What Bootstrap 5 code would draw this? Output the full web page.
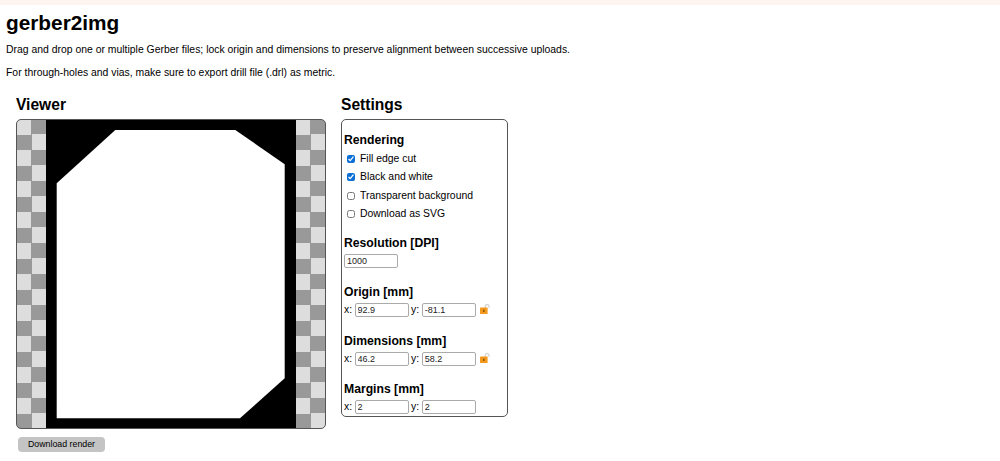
<!DOCTYPE html>
<html lang="en">
<head>
    <meta charset="UTF-8">
    <meta name="viewport" content="width=device-width, initial-scale=1.0">
    <title>gerber2img</title>
    <link href="https://cdn.jsdelivr.net/npm/bootstrap@5.3.0/dist/css/bootstrap.min.css" rel="stylesheet">
    <style>
        html, body { height: 461px; overflow: hidden; }
        body { font-family: "Liberation Sans", Arial, sans-serif; font-size: 10.42px; line-height: 12px; color: #000; }
        .top-strip { height: 5px; background: #fff5f0; }
        .page-title { font-size: 20.8px; line-height: 24px; font-weight: 700; margin: 6px 0 0 6px; }
        .intro { margin: 9px 0 0 6px; }
        .intro + .intro { margin-top: 11px; }
        .panels { margin: 17px 0 0 16px; gap: 15px; }
        .panel-title { font-size: 15.6px; line-height: 18px; font-weight: 700; margin: 0 0 5px; }
        .viewer-box {
            width: 310px; height: 310px; border: 1px solid #555; border-radius: 5px;
            background-color: #ddd;
            background-image: conic-gradient(#999 25%, #ddd 0 50%, #999 0 75%, #ddd 0);
            background-size: 31px 31px;
            background-origin: border-box;
            overflow: hidden;
        }
        .viewer-box svg { display: block; }
        .render-btn {
            width: 87px; height: 15px; margin: 8px 0 0 2px; padding: 0; border: 0; border-radius: 4px;
            background: #c4c4c4; color: #000; font-size: 8.8px; line-height: 15px;
        }
        .settings-box { width: 167px; height: 298px; border: 1px solid #555; border-radius: 5px; padding: 12.5px 2px 0 2px; }
        .group-title { font-size: 12.2px; line-height: 14px; font-weight: 700; margin: 0; }
        .check-list { margin-top: 3.5px; }
        .check-row { height: 18.3px; padding-left: 3px; gap: 5px; margin: 0; }
        .check-row input { width: 8px; height: 8px; margin: 0; accent-color: #0b6fd6; }
        .first-gap { margin-top: 13px; }
        .group-gap { margin-top: 16.7px; }
        .num-field { border: 1px solid #aaa; border-radius: 2px; height: 14px; padding: 0 2px; font-size: 9px; line-height: 12px; width: 54px; font-family: inherit; color: #222; background: #fff; }
        .field-row { gap: 2.5px; margin-top: 4px; height: 14px; }
        .lock-icon { margin-left: 1.3px; }
    </style>
</head>
<body>
    <div class="top-strip"></div>
    <h1 class="page-title">gerber2img</h1>
    <p class="intro">Drag and drop one or multiple Gerber files; lock origin and dimensions to preserve alignment between successive uploads.</p>
    <p class="intro">For through-holes and vias, make sure to export drill file (.drl) as metric.</p>

    <div class="panels d-flex align-items-start">
        <!-- Viewer -->
        <div>
            <h2 class="panel-title">Viewer</h2>
            <div class="viewer-box d-flex justify-content-center">
                <svg width="250" height="308" viewBox="0 0 250 308">
                    <rect width="250" height="308" fill="#000"/>
                    <polygon points="10.7,63.3 69.3,10 189.3,10 238.7,44.3 238.7,258.3 194,298.3 10.7,298.3" fill="#fff"/>
                </svg>
            </div>
            <button type="button" class="render-btn d-block">Download render</button>
        </div>

        <!-- Settings -->
        <div>
            <h2 class="panel-title">Settings</h2>
            <div class="settings-box">
                <h3 class="group-title">Rendering</h3>
                <div class="check-list">
                    <label class="check-row d-flex align-items-center"><input type="checkbox" checked>Fill edge cut</label>
                    <label class="check-row d-flex align-items-center"><input type="checkbox" checked>Black and white</label>
                    <label class="check-row d-flex align-items-center"><input type="checkbox">Transparent background</label>
                    <label class="check-row d-flex align-items-center"><input type="checkbox">Download as SVG</label>
                </div>

                <h3 class="group-title first-gap">Resolution [DPI]</h3>
                <div class="field-row d-flex align-items-center"><input class="num-field" value="1000"></div>

                <h3 class="group-title group-gap">Origin [mm]</h3>
                <div class="field-row d-flex align-items-center">
                    <span>x:</span><input class="num-field" value="92.9">
                    <span>y:</span><input class="num-field" value="-81.1">
                    <svg class="lock-icon" width="11" height="11" viewBox="0 0 11 11"><path d="M5.2 4V2.4a1.9 1.9 0 0 1 3.8 0V4" fill="none" stroke="#cfcfcf" stroke-width="1.1"/><rect y="3.6" width="7.6" height="6.4" rx=".6" fill="#f39a1e"/><rect x="3.2" y="5.6" width="1.3" height="2.4" fill="#7a4a08"/></svg>
                </div>

                <h3 class="group-title group-gap">Dimensions [mm]</h3>
                <div class="field-row d-flex align-items-center">
                    <span>x:</span><input class="num-field" value="46.2">
                    <span>y:</span><input class="num-field" value="58.2">
                    <svg class="lock-icon" width="11" height="11" viewBox="0 0 11 11"><path d="M5.2 4V2.4a1.9 1.9 0 0 1 3.8 0V4" fill="none" stroke="#cfcfcf" stroke-width="1.1"/><rect y="3.6" width="7.6" height="6.4" rx=".6" fill="#f39a1e"/><rect x="3.2" y="5.6" width="1.3" height="2.4" fill="#7a4a08"/></svg>
                </div>

                <h3 class="group-title group-gap">Margins [mm]</h3>
                <div class="field-row d-flex align-items-center">
                    <span>x:</span><input class="num-field" value="2">
                    <span>y:</span><input class="num-field" value="2">
                </div>
            </div>
        </div>
    </div>

    <script src="https://cdn.jsdelivr.net/npm/bootstrap@5.3.0/dist/js/bootstrap.bundle.min.js"></script>
</body>
</html>
